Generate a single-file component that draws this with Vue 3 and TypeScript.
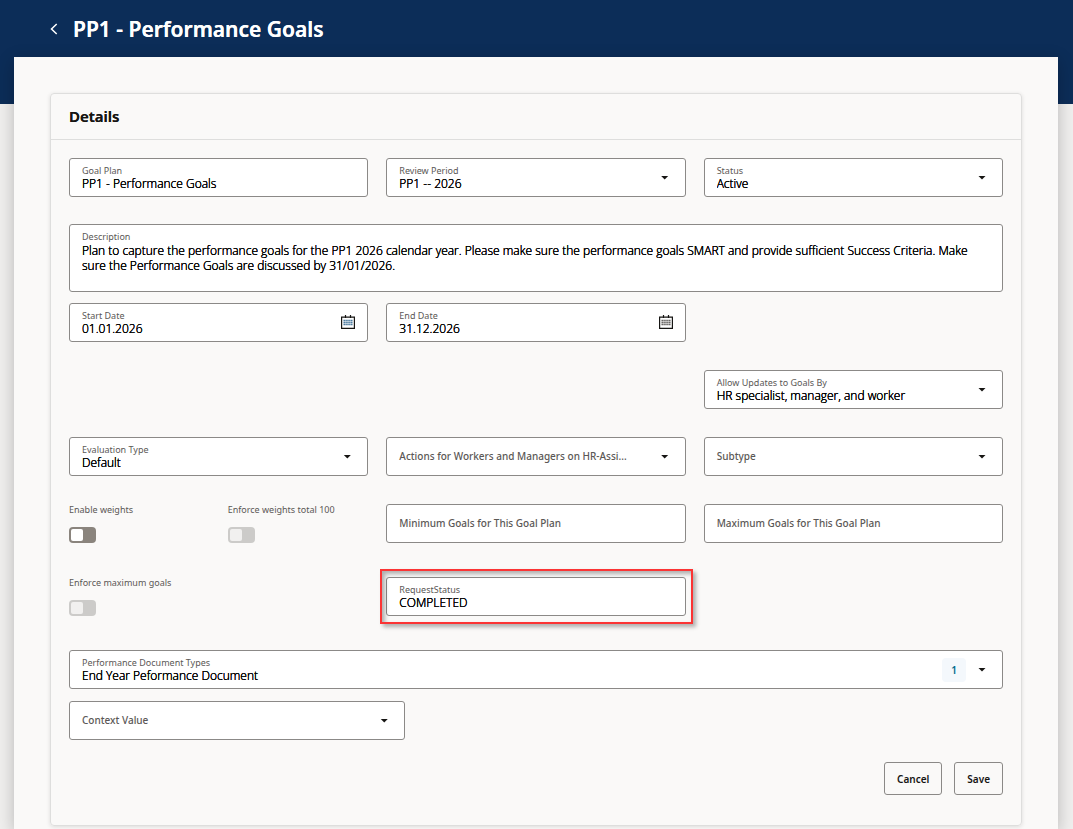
<script setup lang="ts">
import { reactive } from 'vue'

const form = reactive({
  goalPlan: 'PP1 - Performance Goals',
  reviewPeriod: 'PP1 -- 2026',
  status: 'Active',
  description:
    'Plan to capture the performance goals for the PP1 2026 calendar year. Please make sure the performance goals SMART and provide sufficient Success Criteria. Make sure the Performance Goals are discussed by 31/01/2026.',
  startDate: '01.01.2026',
  endDate: '31.12.2026',
  allowUpdates: 'HR specialist, manager, and worker',
  evaluationType: 'Default',
  actions: '',
  subtype: '',
  enableWeights: false,
  enforceWeights: false,
  enforceMaximum: false,
  minimumGoals: '',
  maximumGoals: '',
  requestStatus: 'COMPLETED',
  documentTypes: 'End Year Peformance Document',
  contextValue: '',
})
</script>

<template>
  <div class="page">
    <header class="banner">
      <div class="banner-row">
        <button class="back" type="button" aria-label="Back">
          <svg viewBox="0 0 8 12" width="8" height="12"><path d="M6.7 1 1.5 6l5.2 5" /></svg>
        </button>
        <h1>PP1 - Performance Goals</h1>
      </div>
    </header>

    <main class="sheet">
      <section class="card">
        <h2>Details</h2>
        <form class="form" @submit.prevent>
          <div class="row first">
            <div class="field third">
              <div class="body">
                <label for="goal-plan">Goal Plan</label>
                <input id="goal-plan" v-model="form.goalPlan" type="text" />
              </div>
            </div>
            <div class="field third">
              <div class="body">
                <label for="review-period">Review Period</label>
                <select id="review-period" v-model="form.reviewPeriod">
                  <option>PP1 -- 2026</option>
                </select>
              </div>
              <span class="caret"></span>
            </div>
            <div class="field third">
              <div class="body">
                <label for="status">Status</label>
                <select id="status" v-model="form.status">
                  <option>Active</option>
                </select>
              </div>
              <span class="caret"></span>
            </div>
          </div>

          <div class="row tight">
            <div class="field full area">
              <div class="body">
                <label for="description">Description</label>
                <textarea id="description" v-model="form.description" rows="2"></textarea>
              </div>
            </div>
          </div>

          <div class="row">
            <div class="field third">
              <div class="body">
                <label for="start-date">Start Date</label>
                <input id="start-date" v-model="form.startDate" type="text" />
              </div>
              <button class="calendar" type="button" aria-label="Select start date">
                <svg viewBox="0 0 14 14" width="14" height="14">
                  <path class="frame" d="M.6 2.1h12.8v11.3H.6zM4.5 0v3M9.5 0v3" />
                  <path class="days" d="M2.5 5.5h9M2.5 7.5h9M2.5 9.5h9" />
                </svg>
              </button>
            </div>
            <div class="field third">
              <div class="body">
                <label for="end-date">End Date</label>
                <input id="end-date" v-model="form.endDate" type="text" />
              </div>
              <button class="calendar" type="button" aria-label="Select end date">
                <svg viewBox="0 0 14 14" width="14" height="14">
                  <path class="frame" d="M.6 2.1h12.8v11.3H.6zM4.5 0v3M9.5 0v3" />
                  <path class="days plain" d="M2.5 5.5h9M2.5 7.5h9M2.5 9.5h9" />
                </svg>
              </button>
            </div>
          </div>

          <div class="row">
            <div class="field third last-column">
              <div class="body">
                <label for="allow-updates">Allow Updates to Goals By</label>
                <select id="allow-updates" v-model="form.allowUpdates">
                  <option>HR specialist, manager, and worker</option>
                </select>
              </div>
              <span class="caret"></span>
            </div>
          </div>

          <div class="row">
            <div class="field third">
              <div class="body">
                <label for="evaluation-type">Evaluation Type</label>
                <select id="evaluation-type" v-model="form.evaluationType">
                  <option>Default</option>
                </select>
              </div>
              <span class="caret"></span>
            </div>
            <div class="field third">
              <div class="body empty">
                <label for="actions">Actions for Workers and Managers on HR-Assi...</label>
                <select id="actions" v-model="form.actions">
                  <option value=""></option>
                </select>
              </div>
              <span class="caret"></span>
            </div>
            <div class="field third">
              <div class="body empty">
                <label for="subtype">Subtype</label>
                <select id="subtype" v-model="form.subtype">
                  <option value=""></option>
                </select>
              </div>
              <span class="caret"></span>
            </div>
          </div>

          <div class="row roomy">
            <div class="switch">
              <label for="enable-weights">Enable weights</label>
              <input id="enable-weights" v-model="form.enableWeights" type="checkbox" role="switch" />
            </div>
            <div class="switch">
              <label for="enforce-weights">Enforce weights total 100</label>
              <input id="enforce-weights" v-model="form.enforceWeights" type="checkbox" role="switch" disabled />
            </div>
            <div class="field third">
              <div class="body empty">
                <label for="minimum-goals">Minimum Goals for This Goal Plan</label>
                <input id="minimum-goals" v-model="form.minimumGoals" type="text" />
              </div>
            </div>
            <div class="field third">
              <div class="body empty">
                <label for="maximum-goals">Maximum Goals for This Goal Plan</label>
                <input id="maximum-goals" v-model="form.maximumGoals" type="text" />
              </div>
            </div>
          </div>

          <div class="row roomy">
            <div class="switch wide">
              <label for="enforce-maximum">Enforce maximum goals</label>
              <input id="enforce-maximum" v-model="form.enforceMaximum" type="checkbox" role="switch" disabled />
            </div>
            <div class="field third marked">
              <div class="body">
                <label for="request-status">RequestStatus</label>
                <input id="request-status" v-model="form.requestStatus" type="text" />
              </div>
            </div>
          </div>

          <div class="row close">
            <div class="field full">
              <div class="body">
                <label for="document-types">Performance Document Types</label>
                <select id="document-types" v-model="form.documentTypes">
                  <option>End Year Peformance Document</option>
                </select>
              </div>
              <span class="count">1</span>
              <span class="caret"></span>
            </div>
          </div>

          <div class="field context">
            <div class="body empty">
              <label for="context-value">Context Value</label>
              <select id="context-value" v-model="form.contextValue">
                <option value=""></option>
              </select>
            </div>
            <span class="caret"></span>
          </div>

          <div class="actions">
            <button type="button">Cancel</button>
            <button type="submit">Save</button>
          </div>
        </form>
      </section>
    </main>
  </div>
</template>

<style>
body {
  margin: 0;
  background: #f0efee;
}
</style>

<style scoped>
.page,
.page * {
  box-sizing: border-box;
}

.page {
  display: flex;
  flex-direction: column;
  min-height: 100vh;
  font-family: 'Noto Sans', 'Open Sans', sans-serif;
  color: #161513;
  background: #f0efee;
}

.banner {
  height: 104px;
  margin-bottom: -47px;
  background: #0c2d58;
}

.banner-row {
  display: flex;
  align-items: center;
  gap: 15px;
  height: 57px;
  padding-left: 50px;
}

.back {
  display: flex;
  padding: 0;
  border: 0;
  background: none;
  cursor: pointer;
}

.back path {
  fill: none;
  stroke: #fff;
  stroke-width: 1.5;
}

h1 {
  margin: 0;
  font-size: 21px;
  font-weight: 600;
  line-height: 28px;
  color: #fff;
  text-shadow: 0 0 0 #fff;
}

.sheet {
  flex: 1;
  margin: 0 15px 0 14px;
  padding: 36px 36px 0;
  background: #faf9f8;
  box-shadow: 0 4px 16px rgba(0, 0, 0, 0.24);
}

.card {
  border: 1px solid #dededd;
  border-radius: 4px;
  box-shadow: 0 1px 4px rgba(0, 0, 0, 0.12);
}

h2 {
  margin: 0;
  padding: 0 18px;
  border-bottom: 1px solid #dededd;
  font-size: 15px;
  font-weight: 600;
  line-height: 45px;
  text-shadow: 0 0 0 #161513;
}

.form {
  padding: 18px 18px 30px;
}

.row {
  display: grid;
  grid-template-columns: repeat(6, minmax(0, 1fr));
  column-gap: 18px;
  margin-bottom: 28px;
}

.row.first {
  margin-bottom: 27px;
}

.row.tight {
  margin-bottom: 11px;
}

.row.close {
  margin-bottom: 12px;
}

.row.roomy {
  margin-bottom: 34px;
}

.field {
  position: relative;
  display: flex;
  align-items: center;
  height: 39px;
  padding: 0 12px;
  border: 1px solid #8b8987;
  border-radius: 3px;
  background: #fff;
}

.third {
  grid-column: span 2;
}

.last-column {
  grid-column: 5 / span 2;
}

.full {
  grid-column: 1 / -1;
}

.area {
  height: 68px;
  align-items: flex-start;
}

.context {
  width: 36%;
}

.body {
  flex: 1;
  display: flex;
  flex-direction: column;
  min-width: 0;
}

.body label,
.switch label {
  font-size: 9px;
  line-height: 12px;
  color: #5b5856;
  white-space: nowrap;
}

.body input,
.body select,
.body textarea {
  width: 100%;
  height: 14px;
  margin: 0;
  padding: 0;
  border: 0;
  outline: 0;
  appearance: none;
  background: none;
  font-family: 'Open Sans', 'Noto Sans', sans-serif;
  font-size: 12px;
  font-weight: 300;
  line-height: 14px;
  color: #000;
  text-shadow:
    0 0 0 #000,
    0 0 0 #000;
}

.area .body {
  padding-top: 6px;
}

.body textarea {
  height: 45px;
  line-height: 15px;
  resize: none;
}

.empty {
  display: grid;
  align-items: center;
  padding-bottom: 2px;
}

.empty > * {
  grid-area: 1 / 1;
}

.body.empty label {
  font-size: 10px;
  font-weight: 500;
  line-height: 14px;
}

.caret {
  width: 8px;
  height: 4px;
  margin: 0 4px 0 16px;
  background: #161513;
  clip-path: polygon(0 0, 100% 0, 50% 100%);
  pointer-events: none;
}

.calendar {
  display: flex;
  padding: 0 0 2px;
  border: 0;
  background: none;
  cursor: pointer;
}

.calendar .frame {
  fill: none;
  stroke: #161513;
  stroke-width: 1.2;
}

.calendar .days {
  fill: none;
  stroke: #3c6f96;
  stroke-width: 1.4;
  stroke-dasharray: 1.4 0.5;
}

.calendar .days.plain {
  stroke: #5b5856;
}

.switch {
  display: flex;
  flex-direction: column;
  align-items: flex-start;
  justify-content: space-between;
}

.switch.wide {
  grid-column: span 2;
}

.switch input {
  display: flex;
  align-items: center;
  width: 27px;
  height: 16px;
  margin: 0;
  padding: 2px;
  appearance: none;
  border-radius: 4px;
  background: #8a847d;
}

.switch input::before {
  content: '';
  width: 12px;
  height: 12px;
  border-radius: 2px;
  background: #fff;
}

.switch input:checked {
  justify-content: flex-end;
}

.switch input:disabled {
  background: #cccbc9;
}

.switch input:disabled::before {
  background: #f1f0ef;
}

.marked::after {
  content: '';
  position: absolute;
  inset: -9px -8px -9px -7px;
  border: 2px solid #fb3434;
  box-shadow:
    3px 3px 4px rgba(0, 0, 0, 0.3),
    inset 3px 3px 4px rgba(0, 0, 0, 0.3);
  pointer-events: none;
}

.count {
  width: 24px;
  border-radius: 4px;
  background: #f4f8fc;
  font-size: 10px;
  font-weight: 600;
  line-height: 24px;
  text-align: center;
  color: #00688c;
}

.count + .caret {
  margin-left: 12px;
}

.actions {
  display: flex;
  justify-content: flex-end;
  gap: 12px;
  margin-top: 22px;
}

.actions button {
  height: 33px;
  padding: 0 12px;
  border: 1px solid #8b8987;
  border-radius: 3px;
  background: transparent;
  font: inherit;
  font-size: 10px;
  font-weight: 600;
  color: #161513;
  cursor: pointer;
}
</style>
